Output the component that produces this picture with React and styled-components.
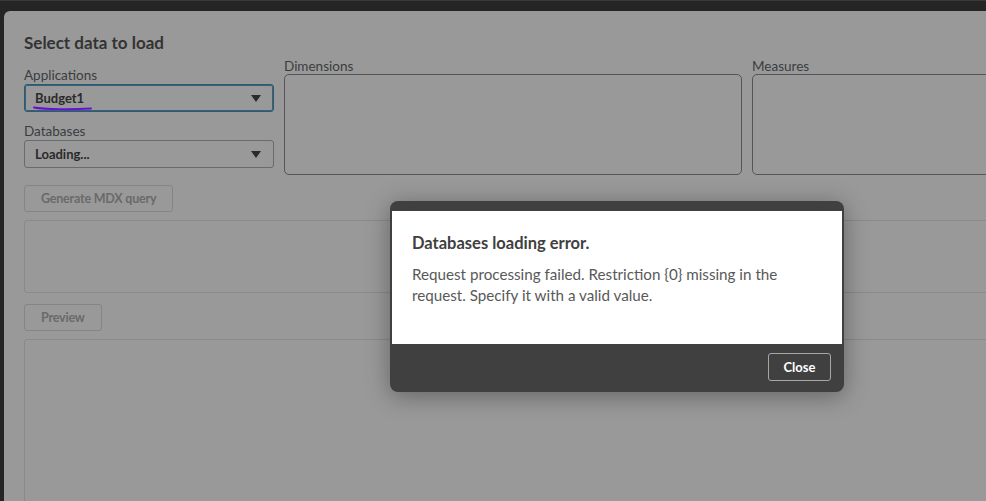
import React from "react";
import styled, { createGlobalStyle } from "styled-components";

const Global = createGlobalStyle`
  html, body { margin: 0; padding: 0; overflow: hidden; background: #262626; }
  body { font-family: "Lato", "Source Sans Pro", "Liberation Sans", sans-serif; }
  #root { width: 986px; height: 501px; }
  * { box-sizing: border-box; }
`;

const Page = styled.div`
  position: relative;
  width: 986px;
  height: 501px;
  overflow: hidden;
  background: #252525;
  border-top: 1px solid #3a3a3a;
  padding: 10px 0 0 4px;
`;

const Panel = styled.div`
  width: 1120px;
  height: 520px;
  background: #999999;
  border-top-left-radius: 6px;
  padding: 22px 20px 0 20px;
  display: flex;
  flex-direction: column;
`;

const TopRow = styled.div`
  display: flex;
  align-items: flex-start;
  gap: 10px;
`;

const LeftCol = styled.div`
  width: 250px;
  display: flex;
  flex-direction: column;
`;

const Title = styled.h1`
  margin: 0 0 14px 0;
  font-size: 17px;
  line-height: 20px;
  font-weight: 700;
  color: #333333;
`;

const Label = styled.div`
  font-size: 13.5px;
  line-height: 16px;
  color: #3a3d40;
  margin-bottom: ${(p) => p.$mb ?? 1}px;
`;

const Select = styled.div`
  position: relative;
  height: 28px;
  border: 1px solid ${(p) => (p.$focus ? "#2f5a72" : "#6a6a6a")};
  ${(p) => (p.$focus ? "box-shadow: inset 0 0 0 1px #3b6178;" : "")}
  border-radius: 3px;
  display: flex;
  align-items: center;
  justify-content: space-between;
  padding: 0 10px 0 10px;
  font-size: 13px;
  font-weight: 700;
  color: #2a2a2a;
  margin-bottom: ${(p) => p.$mb || 0}px;
`;

const Caret = styled.span`
  width: 0;
  height: 0;
  border-left: 5px solid transparent;
  border-right: 5px solid transparent;
  border-top: 7px solid #2b2b2b;
  margin-right: 2px;
`;

const Underline = styled.svg`
  position: absolute;
  left: 8px;
  top: 20px;
  overflow: visible;
`;

const FieldCol = styled.div`
  width: ${(p) => p.$w}px;
  padding-top: 25px;
  display: flex;
  flex-direction: column;
`;

const FieldBox = styled.div`
  height: 101px;
  border: 1px solid #555555;
  border-radius: 5px;
`;

const Button = styled.div`
  align-self: flex-start;
  height: 27px;
  flex: 0 0 27px;
  padding: 0 16px;
  border: 1px solid #858585;
  border-radius: 3px;
  display: flex;
  align-items: center;
  font-size: 12.5px;
  letter-spacing: -0.2px;
  font-weight: 700;
  color: #6a6a6a;
  margin-top: ${(p) => p.$mt}px;
`;

const Area = styled.div`
  height: ${(p) => p.$h}px;
  flex: 0 0 ${(p) => p.$h}px;
  border: 1px solid #8a8a8a;
  border-radius: 3px;
  margin-top: ${(p) => p.$mt}px;
`;

const Dialog = styled.div`
  position: absolute;
  left: 390px;
  top: 200px;
  width: 454px;
  height: 191px;
  background: #404040;
  border-radius: 8px;
  padding: 10px 2px 0 2px;
  display: flex;
  flex-direction: column;
  box-shadow: 0 4px 24px rgba(0, 0, 0, 0.35);
`;

const DialogBody = styled.div`
  background: #ffffff;
  height: 133px;
  padding: 22px 20px 0 20px;
`;

const DialogTitle = styled.div`
  font-size: 16.5px;
  line-height: 20px;
  font-weight: 700;
  color: #404040;
  margin-bottom: 11px;
`;

const DialogText = styled.p`
  margin: 0;
  font-size: 15.2px;
  line-height: 21px;
  color: #595959;
  width: 385px;
`;

const DialogFooter = styled.div`
  flex: 1;
  display: flex;
  justify-content: flex-end;
  align-items: flex-start;
  padding: 9px 11px 0 0;
`;

const CloseButton = styled.button`
  width: 63px;
  height: 28px;
  background: transparent;
  border: 1px solid #a6a6a6;
  border-radius: 3px;
  color: #ffffff;
  font-family: inherit;
  font-size: 13px;
  font-weight: 700;
  padding: 0;
  cursor: pointer;
`;

const message = "Request processing failed. Restriction {0} missing in the request. Specify it with a valid value.";

export default function App() {
  return (
    <>
      <Global />
      <Page>
        <Panel>
          <TopRow>
            <LeftCol>
              <Title>Select data to load</Title>
              <Label>Applications</Label>
              <Select $focus $mb={11}>
                <span>Budget1</span>
                <Caret />
                <Underline width="60" height="6" viewBox="0 0 60 6">
                  <path d="M1 2.5 C 12 4.5, 40 4.5, 58 3.5" stroke="#6a0fd8" strokeWidth="2" fill="none" strokeLinecap="round" />
                </Underline>
              </Select>
              <Label>Databases</Label>
              <Select>
                <span>Loading...</span>
                <Caret />
              </Select>
            </LeftCol>
            <FieldCol $w={458}>
              <Label $mb={0}>Dimensions</Label>
              <FieldBox />
            </FieldCol>
            <FieldCol $w={300}>
              <Label $mb={0}>Measures</Label>
              <FieldBox />
            </FieldCol>
          </TopRow>
          <Button $mt={10}>Generate MDX query</Button>
          <Area $mt={8} $h={73} />
          <Button $mt={11}>Preview</Button>
          <Area $mt={8} $h={200} />
        </Panel>
        <Dialog>
          <DialogBody>
            <DialogTitle>Databases loading error.</DialogTitle>
            <DialogText>{message}</DialogText>
          </DialogBody>
          <DialogFooter>
            <CloseButton>Close</CloseButton>
          </DialogFooter>
        </Dialog>
      </Page>
    </>
  );
}
